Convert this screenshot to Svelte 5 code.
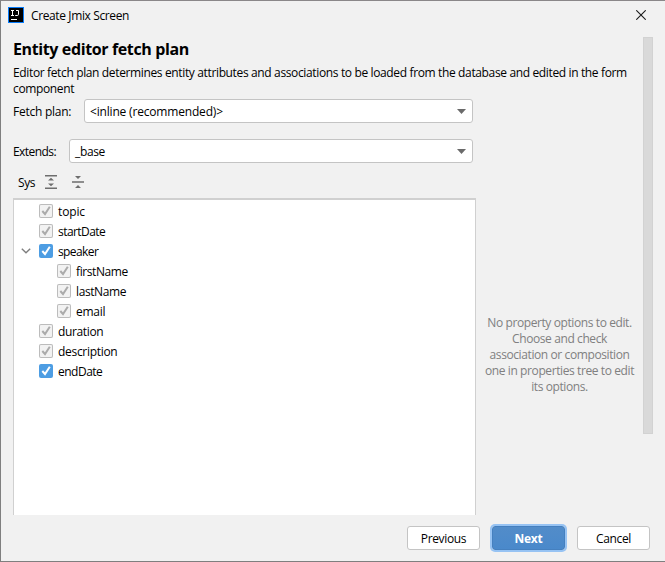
<script>
  const rows = [
    { name: 'topic', level: 0, on: false, ls: -0.15 },
    { name: 'startDate', level: 0, on: false, ls: -0.55 },
    { name: 'speaker', level: 0, on: true, open: true, ls: -0.6 },
    { name: 'firstName', level: 1, on: false, ls: -0.4 },
    { name: 'lastName', level: 1, on: false, ls: -0.4 },
    { name: 'email', level: 1, on: false, ls: -0.25 },
    { name: 'duration', level: 0, on: false, ls: -0.35 },
    { name: 'description', level: 0, on: false, ls: -0.3 },
    { name: 'endDate', level: 0, on: true, ls: -0.5 }
  ];
</script>

{#snippet arrow()}
  <svg class="arrow" width="9" height="5" viewBox="0 0 9 5"><path d="M0 0h9L4.5 5z" fill="#6a6a6a" /></svg>
{/snippet}

<div class="dialog">
  <header class="titlebar">
    <svg class="logo" width="16" height="16" viewBox="0 0 16 16">
      <rect width="16" height="16" fill="#087cfa" />
      <rect x="1" y="1" width="14" height="14" fill="#000" />
      <path d="M3 3.5h3M4.5 3.5v5M3 8.5h3M8 3.5h2.5v3.8q0 1.2-1.2 1.2H7.2" fill="none" stroke="#fff" stroke-width="1" />
      <path d="M3 12.5h6" stroke="#fff" stroke-width="1" />
    </svg>
    <span class="wintitle">Create Jmix Screen</span>
    <svg class="close" width="10" height="10" viewBox="0 0 10 10"><path d="M.3.3l9.4 9.4M9.7.3L.3 9.7" stroke="#1a1a1a" stroke-width="1.1" /></svg>
  </header>

  <main class="viewport">
    <div class="content">
      <h1>Entity editor fetch plan</h1>
      <p class="desc"><span>Editor fetch plan determines entity attributes and associations to be loaded from the database and edited in the form</span><br />component</p>
      <div class="field first">
        <span class="label plan">Fetch plan:</span>
        <div class="combo"><span class="recommended">&lt;inline (recommended)&gt;</span>{@render arrow()}</div>
      </div>
      <div class="field second">
        <span class="label ext">Extends:</span>
        <div class="combo"><span>_base</span>{@render arrow()}</div>
      </div>
      <div class="tools">
        <span>Sys</span>
        <svg class="expand" width="12" height="14" viewBox="0 0 12 14" fill="#6e6e6e"><path d="M0 0h12v1.6H0zM0 12.4h12V14H0zM6 2.8l3 2.7H3zM6 11.2l3-2.7H3z" /></svg>
        <svg class="collapse" width="12" height="14" viewBox="0 0 12 14" fill="#6e6e6e"><path d="M0 6.2h12v1.6H0zM3 1h6L6 4zM3 13h6l-3-3z" /></svg>
      </div>
      <div class="panes">
        <div class="tree">
          {#each rows as row}
            <div class="row" class:child={row.level === 1}>
              <span class="twisty">
                {#if row.open}
                  <svg width="10" height="6" viewBox="0 0 10 6"><path d="M.8.8L5 4.8 9.2.8" fill="none" stroke="#7f7f7f" stroke-width="1.4" /></svg>
                {/if}
              </span>
              <span class="check" class:on={row.on}>
                <svg width="14" height="14" viewBox="0 0 14 14"><path d="M3.3 7L6 10l4.8-7.2" fill="none" stroke={row.on ? '#fff' : '#ababab'} stroke-width="2" /></svg>
              </span>
              <span class="name" style:letter-spacing="{row.ls}px">{row.name}</span>
            </div>
          {/each}
        </div>
        <p class="hint"><span>No property options to edit.</span><span>Choose and check</span><span>association or composition</span><span>one in properties tree to edit</span><span>its options.</span></p>
      </div>
    </div>
    <div class="scrollbar"><div class="thumb"></div></div>
  </main>

  <footer>
    <button>Previous</button>
    <button class="primary">Next</button>
    <button>Cancel</button>
  </footer>
</div>

<style>
  .dialog {
    box-sizing: border-box;
    width: 665px;
    height: 562px;
    display: flex;
    flex-direction: column;
    background: #f1f1f1;
    border: 1px solid #7f7f7f;
    border-top-color: #8a8789;
    border-right: 0;
    font: 12px/16px 'Open Sans', 'Noto Sans', sans-serif;
    letter-spacing: -0.36px;
    color: #000;
    overflow: hidden;
    white-space: nowrap;
  }
  .titlebar { height: 36px; flex: none; display: flex; padding-left: 7px; box-sizing: border-box; }
  .logo { margin-top: 6px; }
  .wintitle { margin: 7px 0 0 7px; letter-spacing: -0.38px; }
  .close { margin: 9px 19px 0 auto; }
  .viewport { height: 478px; flex: none; display: flex; overflow: hidden; }
  .content { width: 630px; flex: none; box-sizing: border-box; padding-left: 12px; display: flex; flex-direction: column; }
  h1 { margin: 1px 0 0; font-size: 16px; line-height: 22px; font-weight: 700; letter-spacing: -0.38px; }
  .desc { margin: 5px 0 0; }
  .field { display: flex; align-items: center; width: 460px; height: 24px; flex: none; }
  .first { margin-top: 2px; }
  .second { margin-top: 16px; }
  .plan { width: 71px; letter-spacing: -0.25px; }
  .ext { width: 56px; letter-spacing: -0.55px; }
  .label { flex: none; padding-top: 1px; }
  .recommended { letter-spacing: -0.18px; }
  .combo {
    flex: 1;
    box-sizing: border-box;
    height: 24px;
    border: 1px solid #c4c4c4;
    border-radius: 3px;
    background: #fff;
    display: flex;
    align-items: center;
    justify-content: space-between;
    padding: 1px 6px 0 5px;
  }
  .tools { display: flex; align-items: center; height: 35px; flex: none; padding-left: 5px; box-sizing: border-box; padding-top: 3px; }
  .tools span { width: 27px; padding-top: 1px; letter-spacing: -0.4px; }
  .collapse { margin-left: 15px; }
  .panes { display: flex; height: 317px; }
  .tree {
    box-sizing: border-box;
    width: 463px;
    flex: none;
    background: #fff;
    border: 1px solid #d0d0d0;
    border-top-width: 2px;
    border-bottom: 0;
    padding-top: 2px;
  }
  .row { display: flex; align-items: center; height: 20px; }
  .twisty { width: 18px; height: 8px; margin-left: 7px; display: flex; }
  .child .twisty { margin-left: 25px; }
  .check { box-sizing: border-box; width: 14px; height: 14px; border-radius: 2px; background: #f2f2f2; box-shadow: inset 0 0 0 1px #bcbcbc; margin-top: -2px; }
  .check svg { display: block; }
  .check.on { background: #4d9de3; box-shadow: none; }
  .name { margin-left: 5px; }
  .hint { margin: 117px 0 0 9px; width: 149px; color: #808080; display: flex; flex-direction: column; align-items: center; letter-spacing: -0.4px; }
  .scrollbar { width: 10px; margin-left: auto; margin-right: 12px; }
  .thumb { box-sizing: border-box; width: 10px; height: 397px; background: #d9d9d9; border: 1px solid #d2d2d2; }
  footer { display: flex; padding: 11px 0 0 406px; }
  button {
    box-sizing: border-box;
    width: 73px;
    height: 24px;
    margin: 0 12px 0 0;
    padding: 1px 0 0;
    border: 1px solid #c4c4c4;
    border-radius: 3px;
    background: #fff;
    font: inherit;
    color: #000;
    letter-spacing: -0.35px;
  }
  .primary { background: linear-gradient(#528cc9, #4a89cb); border-color: #4580bf; box-shadow: 0 0 0 2px #97c3f3; color: #fff; font-weight: 700; letter-spacing: -0.2px; }
</style>
